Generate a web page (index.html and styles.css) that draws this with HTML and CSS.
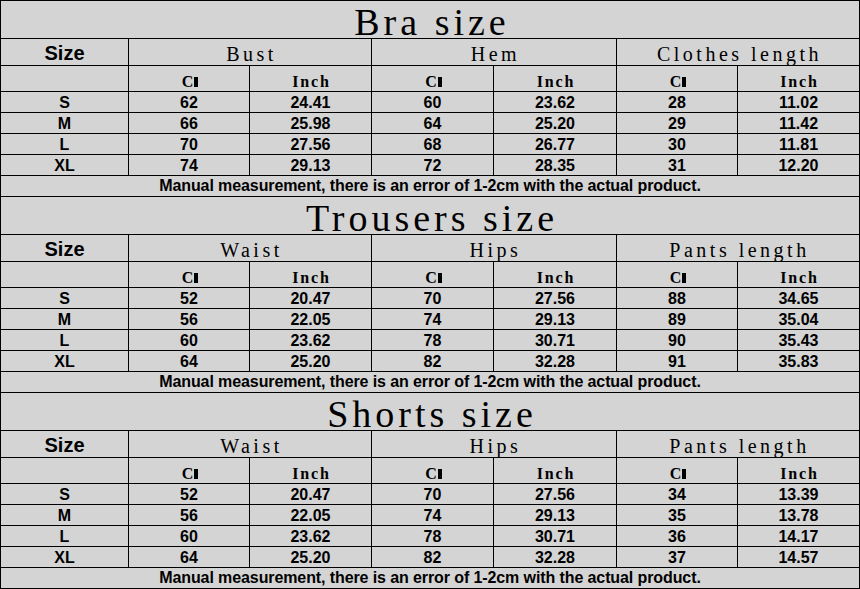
FILE: index.html
```html
<!DOCTYPE html>
<html lang="en">
<head>
<meta charset="utf-8">
<title>Size chart</title>
<link rel="stylesheet" href="styles.css">
</head>
<body>
<table class="chart">
  <colgroup>
    <col class="c1"><col class="c2"><col class="c3"><col class="c4"><col class="c5"><col class="c6"><col class="c7">
  </colgroup>
  <tbody>
    <tr class="title-row"><td class="title" colspan="7">Bra size</td></tr>
    <tr class="head-row"><td class="size-head">Size</td><td class="measure" colspan="2">Bust</td><td class="measure" colspan="2">Hem</td><td class="measure" colspan="2">Clothes length</td></tr>
    <tr class="unit-row"><td></td><td class="unit">C<span class="m">M</span></td><td class="unit">Inch</td><td class="unit">C<span class="m">M</span></td><td class="unit">Inch</td><td class="unit">C<span class="m">M</span></td><td class="unit">Inch</td></tr>
    <tr class="data-row"><td>S</td><td>62</td><td>24.41</td><td>60</td><td>23.62</td><td>28</td><td>11.02</td></tr>
    <tr class="data-row"><td>M</td><td>66</td><td>25.98</td><td>64</td><td>25.20</td><td>29</td><td>11.42</td></tr>
    <tr class="data-row"><td>L</td><td>70</td><td>27.56</td><td>68</td><td>26.77</td><td>30</td><td>11.81</td></tr>
    <tr class="data-row"><td>XL</td><td>74</td><td>29.13</td><td>72</td><td>28.35</td><td>31</td><td>12.20</td></tr>
    <tr class="note-row"><td colspan="7">Manual measurement, there is an error of 1-2cm with the actual product.</td></tr>

    <tr class="title-row"><td class="title" colspan="7">Trousers size</td></tr>
    <tr class="head-row"><td class="size-head">Size</td><td class="measure" colspan="2">Waist</td><td class="measure" colspan="2">Hips</td><td class="measure" colspan="2">Pants length</td></tr>
    <tr class="unit-row"><td></td><td class="unit">C<span class="m">M</span></td><td class="unit">Inch</td><td class="unit">C<span class="m">M</span></td><td class="unit">Inch</td><td class="unit">C<span class="m">M</span></td><td class="unit">Inch</td></tr>
    <tr class="data-row"><td>S</td><td>52</td><td>20.47</td><td>70</td><td>27.56</td><td>88</td><td>34.65</td></tr>
    <tr class="data-row"><td>M</td><td>56</td><td>22.05</td><td>74</td><td>29.13</td><td>89</td><td>35.04</td></tr>
    <tr class="data-row"><td>L</td><td>60</td><td>23.62</td><td>78</td><td>30.71</td><td>90</td><td>35.43</td></tr>
    <tr class="data-row"><td>XL</td><td>64</td><td>25.20</td><td>82</td><td>32.28</td><td>91</td><td>35.83</td></tr>
    <tr class="note-row"><td colspan="7">Manual measurement, there is an error of 1-2cm with the actual product.</td></tr>

    <tr class="title-row"><td class="title" colspan="7">Shorts size</td></tr>
    <tr class="head-row"><td class="size-head">Size</td><td class="measure" colspan="2">Waist</td><td class="measure" colspan="2">Hips</td><td class="measure" colspan="2">Pants length</td></tr>
    <tr class="unit-row"><td></td><td class="unit">C<span class="m">M</span></td><td class="unit">Inch</td><td class="unit">C<span class="m">M</span></td><td class="unit">Inch</td><td class="unit">C<span class="m">M</span></td><td class="unit">Inch</td></tr>
    <tr class="data-row"><td>S</td><td>52</td><td>20.47</td><td>70</td><td>27.56</td><td>34</td><td>13.39</td></tr>
    <tr class="data-row"><td>M</td><td>56</td><td>22.05</td><td>74</td><td>29.13</td><td>35</td><td>13.78</td></tr>
    <tr class="data-row"><td>L</td><td>60</td><td>23.62</td><td>78</td><td>30.71</td><td>36</td><td>14.17</td></tr>
    <tr class="data-row"><td>XL</td><td>64</td><td>25.20</td><td>82</td><td>32.28</td><td>37</td><td>14.57</td></tr>
    <tr class="note-row"><td colspan="7">Manual measurement, there is an error of 1-2cm with the actual product.</td></tr>
  </tbody>
</table>
</body>
</html>
```

FILE: styles.css
```css
html, body {
  margin: 0;
  padding: 0;
  background: #d4d4d4;
}

.chart {
  width: 860px;
  border-collapse: collapse;
  table-layout: fixed;
  background: #d4d4d4;
  color: #000;
  font-family: "Liberation Sans", Arial, sans-serif;
  font-weight: bold;
  font-size: 16px;
}

.c1 { width: 128px; }
.c2 { width: 121px; }
.c3 { width: 122px; }
.c4 { width: 122px; }
.c5 { width: 123px; }
.c6 { width: 121px; }
.c7 { width: 122px; }

.chart td {
  border: 1px solid #000;
  padding: 0;
  text-align: center;
  vertical-align: top;
  white-space: nowrap;
}

/* row pitch = height + padding-top + 1px border */
.title-row td {
  height: 31px;
  padding-top: 6px;
  line-height: 31px;
}

.head-row td {
  height: 22px;
  padding-top: 4px;
  line-height: 20px;
}

.unit-row td {
  height: 17px;
  padding-top: 8px;
  line-height: 16px;
}

.data-row td {
  height: 17px;
  padding-top: 3px;
  line-height: 16px;
}

.note-row td {
  height: 18px;
  padding-top: 2px;
  line-height: 16px;
  letter-spacing: -0.1px;
}

.chart td.title {
  font-family: "Liberation Serif", "Times New Roman", serif;
  font-weight: normal;
  font-size: 38px;
  letter-spacing: 4px;
  padding-left: 4px;
}

.chart td.size-head {
  font-size: 20px;
}

.chart td.measure {
  font-family: "Liberation Serif", "Times New Roman", serif;
  font-weight: normal;
  font-size: 20px;
  letter-spacing: 3.5px;
  padding-top: 5px;
  height: 21px;
  padding-left: 3px;
}

.chart td.unit {
  font-family: "Liberation Serif", "Times New Roman", serif;
  font-weight: bold;
  font-size: 16px;
  letter-spacing: 1.8px;
  padding-left: 2px;
}

.m {
  display: inline-block;
  width: 4px;
  height: 10px;
  margin-left: -1px;
  background: #000;
  color: #000;
  font-size: 10px;
  line-height: 10px;
  letter-spacing: 0;
  overflow: hidden;
  vertical-align: baseline;
}
```
